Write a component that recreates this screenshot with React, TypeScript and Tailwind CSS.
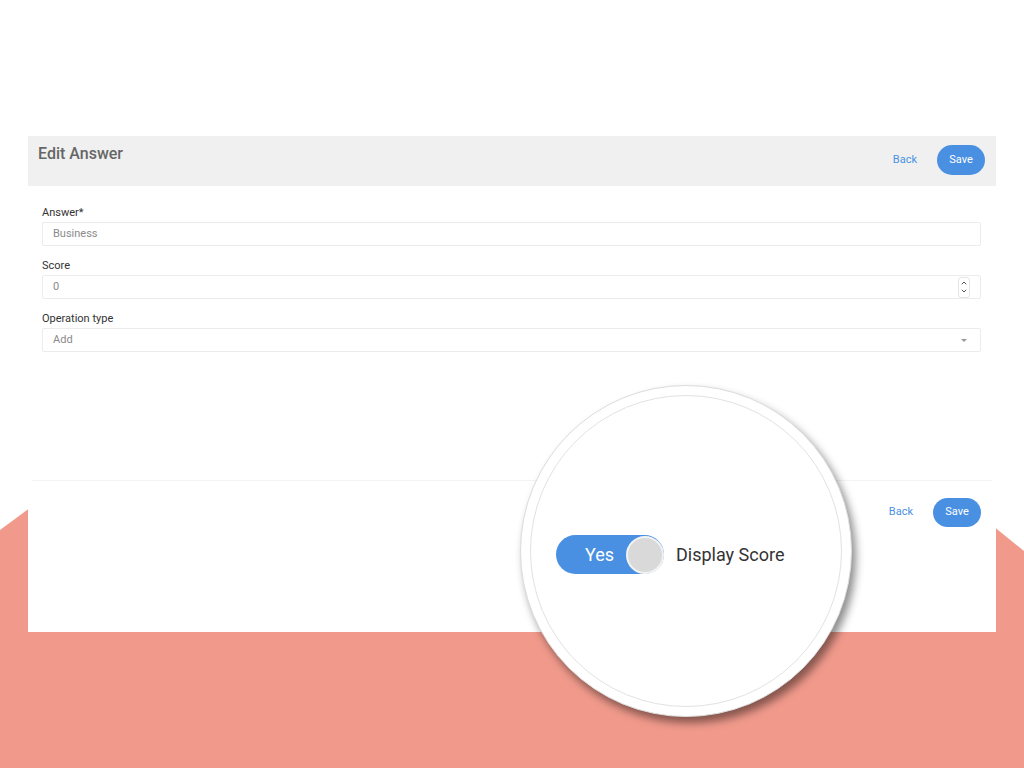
import { ChevronUp, ChevronDown } from "lucide-react";

const FONT = { fontFamily: "Roboto, 'Noto Sans', sans-serif" };

function Field({ label, value, kind }: { label: string; value: string; kind?: "number" | "select" }) {
  return (
    <div className="flex flex-col">
      <label className="h-[14px] text-[11px] leading-[14px] text-[#333] mb-[2px]">{label}</label>
      <div className="h-[24px] border border-[#ececec] rounded-[2px] flex items-center pl-[10px] pr-[12px] text-[11px] text-[#8a8a8a]">
        <span className="flex-1 text-[#8a8a8a]">{value}</span>
        {kind === "number" && (
          <span className="flex flex-col items-center justify-center w-[12px] h-[21px] border border-[#e4e4e4] rounded-[3px] text-[#555] -mr-[2px]">
            <ChevronUp size={8} strokeWidth={3} />
            <ChevronDown size={8} strokeWidth={3} />
          </span>
        )}
        {kind === "select" && (
          <span className="w-0 h-0 border-l-[3px] border-r-[3px] border-t-[3px] border-l-transparent border-r-transparent border-t-[#999] mr-[1px]" />
        )}
      </div>
    </div>
  );
}

function Actions({ height }: { height: string }) {
  return (
    <div className="flex items-center gap-[20px]">
      <button className="text-[11px] text-[#4a90e2]">Back</button>
      <button className={`w-[48px] ${height} rounded-full bg-[#4a90e2] text-white text-[11px]`}>Save</button>
    </div>
  );
}

export default function App() {
  return (
    <div className="relative w-[1024px] h-[768px] bg-white overflow-hidden" style={FONT}>
      <svg className="absolute inset-0" width="1024" height="768" viewBox="0 0 1024 768">
        <polygon points="0,530 522,144 1024,551 1024,768 0,768" fill="#f19a8c" />
      </svg>

      <div className="relative mt-[136px] mx-[28px] h-[496px] bg-white flex flex-col">
        <div className="h-[50px] bg-[#f0f0f0] flex items-start justify-between pl-[10px] pr-[11px]">
          <h1 className="mt-[6px] text-[16px] font-medium text-[#666]">Edit Answer</h1>
          <div className="mt-[9px]">
            <Actions height="h-[30px]" />
          </div>
        </div>

        <div className="flex flex-col gap-[13px] pl-[14px] pr-[15px] pt-[20px]">
          <Field label="Answer*" value="Business" />
          <Field label="Score" value="0" kind="number" />
          <Field label="Operation type" value="Add" kind="select" />
        </div>

        <div className="mt-auto mx-[4px] border-t border-[#f3f3f3]" />
        <div className="h-[151px] flex items-start justify-end pr-[15px] pt-[17px]">
          <Actions height="h-[29px]" />
        </div>
      </div>

      <div className="absolute left-[520px] top-[385px] w-[332px] h-[332px] rounded-full bg-white border border-[#dcdcdc] shadow-[4px_6px_8px_rgba(0,0,0,0.45)]">
        <div className="absolute inset-[9px] rounded-full border border-[#e2e2e2]" />
        <div className="absolute left-[35px] top-[149px] flex items-center">
          <div className="relative w-[108px] h-[39px] rounded-full bg-[#4a90e2] flex items-center">
            <span className="pl-[29px] text-[18px] text-white">Yes</span>
            <span className="absolute right-0 top-[1px] w-[38px] h-[38px] rounded-full bg-[#d9d9d9] border-2 border-[#f2f2f2]" />
          </div>
          <span className="ml-[12px] text-[18px] text-[#333]">Display Score</span>
        </div>
      </div>
    </div>
  );
}
